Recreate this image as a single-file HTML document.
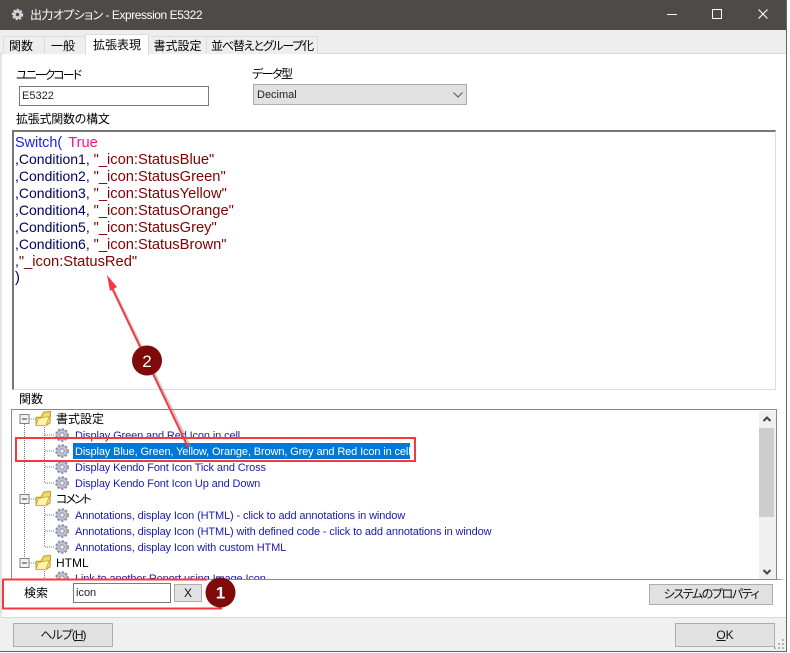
<!DOCTYPE html>
<html><head><meta charset="utf-8">
<style>
html,body{margin:0;padding:0;background:#fff}
body{width:790px;height:653px;position:relative;overflow:hidden;font-family:"Liberation Sans","Noto Sans CJK JP",sans-serif;font-size:12px;color:#000;font-feature-settings:"palt"}
.a{position:absolute;white-space:nowrap;line-height:16px}
.box{position:absolute;box-sizing:border-box}
.btn{position:absolute;box-sizing:border-box;background:#e1e1e1;border:1px solid #adadad;text-align:center;color:#111;white-space:nowrap}
.tab{position:absolute;box-sizing:border-box;top:36px;height:18px;background:#eee;border:1px solid #dcdcdc;border-bottom:0;text-align:center;line-height:19px;font-size:12px;white-space:nowrap}
.code{left:15px;font-size:14.7px;line-height:17px;color:#800000}
.n{color:#000060;font-size:14px}
.t{font-size:11px;letter-spacing:-.126px;color:#1a1ab0;left:75px;line-height:16px}
.f{font-size:12px;color:#000;line-height:16px}
</style></head><body>

<div class="box" style="left:0;top:0;width:786px;height:30px;background:#4d4a47"></div>
<div class="a" style="left:30px;top:7px;color:#fff;font-size:12px"><span style="letter-spacing:-.6px">出力オプション</span><span style="letter-spacing:-.45px"> - Expression E5322</span></div>
<div class="box" style="left:0;top:30px;width:786px;height:24px;background:#eee;border-bottom:1px solid #d9d9d9"></div>

<div class="tab" style="left:3px;width:42px;padding-right:6px">関数</div>
<div class="tab" style="left:44px;width:42px;padding-right:4px">一般</div>
<div class="tab" style="left:85px;width:64px;top:34px;height:21px;background:#fff;z-index:2;line-height:20px">拡張表現</div>
<div class="tab" style="left:148px;width:59px">書式設定</div>
<div class="tab" style="left:206px;width:112px;letter-spacing:-1.2px">並べ替えとグループ化</div>

<div class="box" style="left:0;top:54px;width:2px;height:564px;background:#e4e4e4"></div>
<div class="box" style="left:0;top:617px;width:786px;height:34px;background:#f0f0f0;border-top:1px solid #d9d9d9"></div>
<div class="box" style="left:786px;top:0;width:1px;height:652px;background:#666"></div>
<div class="box" style="left:787px;top:0;width:3px;height:653px;background:#fff"></div>
<div class="box" style="left:0;top:651px;width:787px;height:1px;background:#666"></div>

<div class="a" style="left:16px;top:67px;letter-spacing:-2px">ユニークコード</div>
<div class="box" style="left:19px;top:86px;width:190px;height:20px;border:1px solid #7a7a7a;background:#fff"></div>
<div class="a" style="left:22px;top:88px;color:#222;font-size:11px">E5322</div>
<div class="a" style="left:252px;top:66px;letter-spacing:-1.5px">データ型</div>
<div class="box" style="left:253px;top:84px;width:214px;height:21px;background:#e1e1e1;border:1px solid #adadad"></div>
<div class="a" style="left:257px;top:87px;color:#222;font-size:11px">Decimal</div>
<svg class="box" style="left:452px;top:91px" width="12" height="8"><path d="M1.5 1.5L6 6L10.5 1.5" fill="none" stroke="#555" stroke-width="1"/></svg>
<div class="a" style="left:16px;top:111px;letter-spacing:-.25px">拡張式関数の構文</div>

<div class="box" style="left:12px;top:130px;width:764px;height:260px;background:#fff;border-top:2px solid #777;border-left:2px solid #777;border-right:1px solid #ddd;border-bottom:1px solid #ddd"></div>
<div class="a code" style="top:135px;color:#2020e0"><span style="font-size:14.4px">Switch(</span><span style="color:#f0148c;margin-left:6px">True</span></div>
<div class="a code" style="top:151px"><span class="n">,Condition1, </span>"_icon:StatusBlue"</div>
<div class="a code" style="top:168px"><span class="n">,Condition2, </span>"_icon:StatusGreen"</div>
<div class="a code" style="top:185px"><span class="n">,Condition3, </span>"_icon:StatusYellow"</div>
<div class="a code" style="top:202px"><span class="n">,Condition4, </span>"_icon:StatusOrange"</div>
<div class="a code" style="top:219px"><span class="n">,Condition5, </span>"_icon:StatusGrey"</div>
<div class="a code" style="top:236px"><span class="n">,Condition6, </span>"_icon:StatusBrown"</div>
<div class="a code" style="top:253px"><span class="n">,</span>"_icon:StatusRed"</div>
<div class="a code" style="top:270px;color:#000060">)</div>

<div class="a" style="left:19px;top:391px">関数</div>
<div class="box" style="left:11px;top:409px;width:766px;height:171px;border:1px solid #8a8a8a;background:#fff"></div>

<svg class="box" style="left:0;top:0" width="790" height="653">
<defs>
<g id="gear"><circle r="5.6" fill="#b9bcd0" stroke="#8a8da6" stroke-width="2.4" stroke-dasharray="2.2 1.5"/><circle r="5" fill="#c6c8da" stroke="#9a9db4" stroke-width=".8"/><circle r="2.2" fill="#eef0f6" stroke="#7f8299" stroke-width=".9"/></g>
<g id="folder"><path d="M-7 6.5L-7 -1.5L-2 -2L1 -7L7.5 -7.5L7 4L3 6.5Z" fill="#f6d95f" stroke="#b8962e"/><path d="M-7 6.5L-4.5 -.5L6 -2.5L3 6.5Z" fill="#fff3ae" stroke="#c9a945" stroke-width=".8"/></g>
<g id="pm"><rect x="-4.5" y="-4.5" width="9" height="9" fill="#f2f2f2" stroke="#808080"/><path d="M-2.5 0H2.5" stroke="#333"/></g>
</defs>
<g stroke="#777" stroke-dasharray="1 1" fill="none">
<path d="M24.5 424V563M44.5 427V483M44.5 507V547M44.5 571V580"/>
<path d="M29 419H36M29 499H36M29 563H36M45 435H55M45 451H55M45 467H55M45 483H55M45 515H55M45 531H55M45 547H55"/>
</g>
<use href="#pm" x="24.5" y="419"/><use href="#pm" x="24.5" y="499"/><use href="#pm" x="24.5" y="563"/>
<use href="#folder" x="43" y="419"/><use href="#folder" x="43" y="499"/><use href="#folder" x="43" y="563"/>
<use href="#gear" x="62" y="435"/><use href="#gear" x="62" y="451"/><use href="#gear" x="62" y="467"/><use href="#gear" x="62" y="483"/>
<use href="#gear" x="62" y="515"/><use href="#gear" x="62" y="531"/><use href="#gear" x="62" y="547"/><use href="#gear" x="62" y="578"/>
</svg>

<div class="a f" style="left:56px;top:411px">書式設定</div>
<div class="a t" style="top:428px">Display Green and Red Icon in cell</div>
<div class="box" style="left:73px;top:443px;width:337px;height:16px;background:#0078d7"></div>
<div class="a t" style="top:444px;color:#fff">Display Blue, Green, Yellow, Orange, Brown, Grey and Red Icon in cell</div>
<div class="a t" style="top:460px">Display Kendo Font Icon Tick and Cross</div>
<div class="a t" style="top:476px">Display Kendo Font Icon Up and Down</div>
<div class="a f" style="left:56px;top:491px;letter-spacing:-2px">コメント</div>
<div class="a t" style="top:508px">Annotations, display Icon (HTML) - click to add annotations in window</div>
<div class="a t" style="top:524px">Annotations, display Icon (HTML) with defined code - click to add annotations in window</div>
<div class="a t" style="top:540px">Annotations, display Icon with custom HTML</div>
<div class="a f" style="left:56px;top:555px">HTML</div>
<div class="a t" style="top:571px">Link to another Report using Image Icon</div>

<div class="box" style="left:0;top:579px;width:786px;height:38px;background:#fff;border-top:1px solid #8a8a8a;border-left:11px solid #fff;border-right:9px solid #fff"></div>
<div class="box" style="left:0;top:54px;width:2px;height:564px;background:#e4e4e4"></div>

<div class="box" style="left:759px;top:411px;width:17px;height:168px;background:#f0f0f0"></div>
<div class="box" style="left:759px;top:428px;width:15px;height:89px;background:#cdcdcd"></div>
<svg class="box" style="left:762px;top:415px" width="10" height="162"><path d="M1.5 6L5 2.5L8.5 6" fill="none" stroke="#444" stroke-width="2"/><path d="M1.5 155L5 158.5L8.5 155" fill="none" stroke="#444" stroke-width="2"/></svg>

<div class="a" style="left:24px;top:585px">検索</div>
<div class="box" style="left:73px;top:583px;width:98px;height:20px;border:1px solid #7a7a7a;background:#fff"></div>
<div class="a" style="left:76px;top:585px;color:#222;font-size:11px">icon</div>
<div class="btn" style="left:174px;top:584px;width:28px;height:18px;line-height:17px;font-size:12px">X</div>
<div class="btn" style="left:649px;top:584px;width:124px;height:21px;line-height:19px;letter-spacing:-1.4px">システムのプロパティ</div>
<div class="btn" style="left:13px;top:623px;width:100px;height:24px;line-height:22px;letter-spacing:-1px">ヘルプ(<u>H</u>)</div>
<div class="btn" style="left:675px;top:623px;width:100px;height:24px;line-height:22px"><u>O</u>K</div>
<svg class="box" style="left:774px;top:639px" width="12" height="12"><g fill="#b5b5b5"><rect x="8" y="0" width="2" height="2"/><rect x="4" y="4" width="2" height="2"/><rect x="8" y="4" width="2" height="2"/><rect x="0" y="8" width="2" height="2"/><rect x="4" y="8" width="2" height="2"/><rect x="8" y="8" width="2" height="2"/></g></svg>

<svg class="box" style="left:0;top:0" width="790" height="653">
<g stroke="#fff" fill="none">
<path d="M667 14.5H677"/><rect x="712.5" y="9.5" width="9" height="9"/><path d="M758.5 9.5L767.5 18.5M767.5 9.5L758.5 18.5" stroke-width="1.1"/>
</g>
<g transform="translate(17.5,14.5)"><circle r="4.5" fill="#cfd0dc" stroke="#d8d8e4" stroke-width="2.4" stroke-dasharray="2 1.4"/><circle r="1.8" fill="#4d4a47"/></g>
<path d="M191 448L113 288" stroke="#9a9a9a" stroke-width="2" opacity=".5"/>
<path d="M188 447L112 288" stroke="#f8373f" stroke-width="2" fill="none"/>
<path d="M107 275L117 287L110 291Z" fill="#f8373f"/>
<rect x="16" y="438" width="399" height="23" fill="none" stroke="#f8373f" stroke-width="2"/>
<path d="M3 579V608.5H222M3 579.5H207" fill="none" stroke="#f8373f" stroke-width="2"/>
<circle cx="147" cy="360.500" r="15" fill="#7f0a0a"/>
<circle cx="220.500" cy="592.500" r="15" fill="#7f0a0a"/>
<text x="147" y="367" fill="#fff" font-family="Liberation Sans" font-size="17" text-anchor="middle">2</text>
<text x="220.500" y="598.500" fill="#fff" font-family="Liberation Sans" font-size="17" font-weight="bold" text-anchor="middle">1</text>
</svg>
</body></html>
